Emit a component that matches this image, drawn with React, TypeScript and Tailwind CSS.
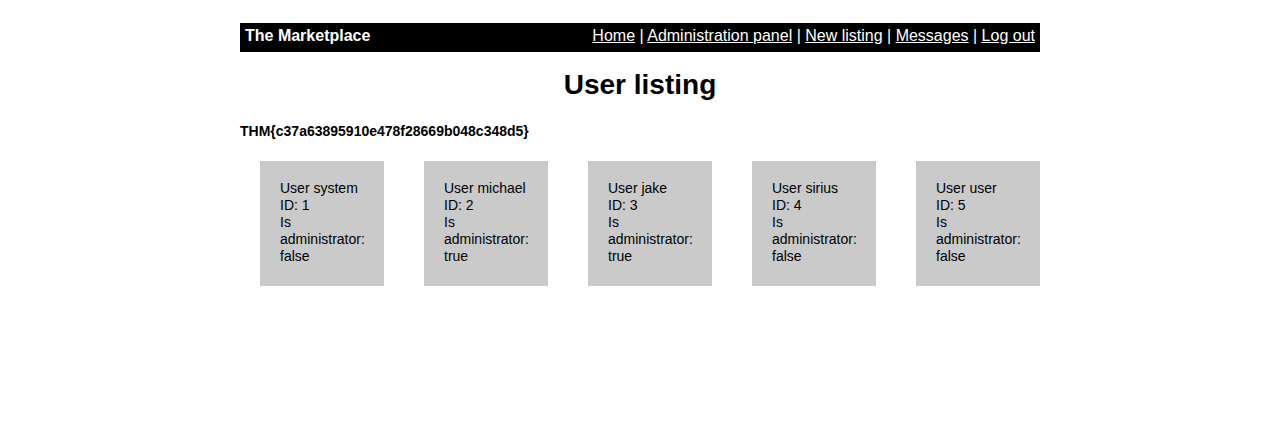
const users = [
  { name: "system", id: 1, admin: false },
  { name: "michael", id: 2, admin: true },
  { name: "jake", id: 3, admin: true },
  { name: "sirius", id: 4, admin: false },
  { name: "user", id: 5, admin: false },
];

const links = ["Home", "Administration panel", "New listing", "Messages", "Log out"];

export default function App() {
  return (
    <div className="min-h-[445px] bg-white text-black font-['Liberation_Sans',Arial,sans-serif] text-[14px]">
      <div className="w-[800px] mx-auto pt-[23px]">
        <div className="flex items-start justify-between h-[29px] pt-[1px] bg-black text-white px-[5px] text-[16px]">
          <span className="font-bold">The Marketplace</span>
          <div>
            {links.map((l, i) => (
              <span key={l}>
                {i > 0 && " | "}
                <a href="#" className="underline">{l}</a>
              </span>
            ))}
          </div>
        </div>

        <h1 className="text-center font-bold text-[28px] leading-[32px] mt-[17px]">User listing</h1>

        <p className="font-bold leading-[16px] mt-[22px]">THM&#123;c37a63895910e478f28669b048c348d5&#125;</p>

        <div className="flex gap-10 pl-5 mt-[22px]">
          {users.map((u) => (
            <div key={u.id} className="w-[124px] h-[125px] shrink-0 bg-[#cacaca] px-5 pt-[19px] leading-[17px]">
              User {u.name}
              <br />
              ID: {u.id}
              <br />
              Is administrator: {u.admin ? "true" : "false"}
            </div>
          ))}
        </div>
      </div>
    </div>
  );
}
